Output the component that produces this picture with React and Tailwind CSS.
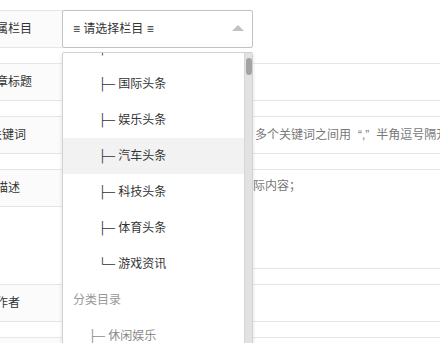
import React from 'react';

const Label = ({ children }) => (
  <div className="w-[110px] h-[38px] shrink-0 flex items-center justify-center border border-[#e6e6e6] bg-[#fbfbfb] rounded-l-[2px] text-[#333]">
    {children}
  </div>
);

const Input = ({ children, tall }) => (
  <div
    className={`flex-1 ml-[-1px] border border-[#e6e6e6] bg-white px-[10px] text-[#777] ${
      tall ? 'h-[100px] pt-[6px] leading-[20px]' : 'h-[38px] flex items-center'
    }`}
  >
    {children}
  </div>
);

const options = [
  { text: '├─ 国内头条', pad: 'pl-[35px]' },
  { text: '├─ 国际头条', pad: 'pl-[35px]' },
  { text: '├─ 娱乐头条', pad: 'pl-[35px]' },
  { text: '├─ 汽车头条', pad: 'pl-[35px]', active: true },
  { text: '├─ 科技头条', pad: 'pl-[35px]' },
  { text: '├─ 体育头条', pad: 'pl-[35px]' },
  { text: '└─ 游戏资讯', pad: 'pl-[35px]' },
  { text: '分类目录', pad: 'pl-[10px]', group: true },
  { text: '├─ 休闲娱乐', pad: 'pl-[25px]', muted: true },
];

export default function App() {
  return (
    <div className="w-[440px] h-[343px] overflow-hidden bg-white text-[12px] font-['Liberation_Sans','Noto_Sans_CJK_SC',sans-serif]">
      <div className="ml-[-47px] w-[540px] pt-[10px]">
        {/* 所属栏目 select, opened */}
        <div className="flex mb-[15px]">
          <Label>所属栏目</Label>
          <div className="relative ml-[-1px] w-[191px]">
            <div className="h-[38px] flex items-center justify-between border border-[#c2c2c2] rounded-[2px] bg-white pl-[10px] pr-[8px] text-[#333]">
              <span>≡ 请选择栏目 ≡</span>
              <span className="w-0 h-0 border-x-[6px] border-x-transparent border-b-[6px] border-b-[#c2c2c2] mb-[2px]" />
            </div>
            <div className="absolute left-0 top-[42px] z-10 w-full h-[300px] flex border border-[#d2d2d2] rounded-[2px] bg-white shadow-[0_2px_4px_rgba(0,0,0,0.12)]">
              <div className="flex-1 overflow-hidden">
                <div className="mt-[-23px]">
                  {options.map((o) => (
                    <div
                      key={o.text}
                      className={`h-[36px] leading-[36px] whitespace-nowrap ${o.pad} ${
                        o.active ? 'bg-[#f2f2f2]' : ''
                      } ${o.group ? 'text-[#999]' : o.muted ? 'text-[#8a8a8a]' : 'text-[#333]'}`}
                    >
                      {o.text}
                    </div>
                  ))}
                </div>
              </div>
              <div className="w-[8px] shrink-0 bg-[#e2e2e2] border-l border-[#d6d6d6] pt-[5px]">
                <div className="mx-auto w-[6px] h-[17px] rounded-[3px] bg-[#a3a3a3]" />
              </div>
            </div>
          </div>
        </div>

        <div className="flex mb-[15px]">
          <Label>文章标题</Label>
          <Input />
        </div>

        <div className="flex mb-[15px]">
          <Label>关键词</Label>
          <Input>
            <span className="whitespace-nowrap pl-[2px]">
              填写关键词，便于搜索引擎收录，多个关键词之间用<span className="mx-[7px]">“,”</span>半角逗号隔开
            </span>
          </Input>
        </div>

        <div className="flex mb-[15px] items-start">
          <Label>描述</Label>
          <Input tall>
            <span className="whitespace-nowrap">请输入文章描述，应概括文章的实际内容；</span>
          </Input>
        </div>

        <div className="flex mb-[15px]">
          <Label>作者</Label>
          <Input />
        </div>

        <div className="flex mb-[15px]">
          <Label>来源</Label>
          <Input />
        </div>
      </div>
    </div>
  );
}
